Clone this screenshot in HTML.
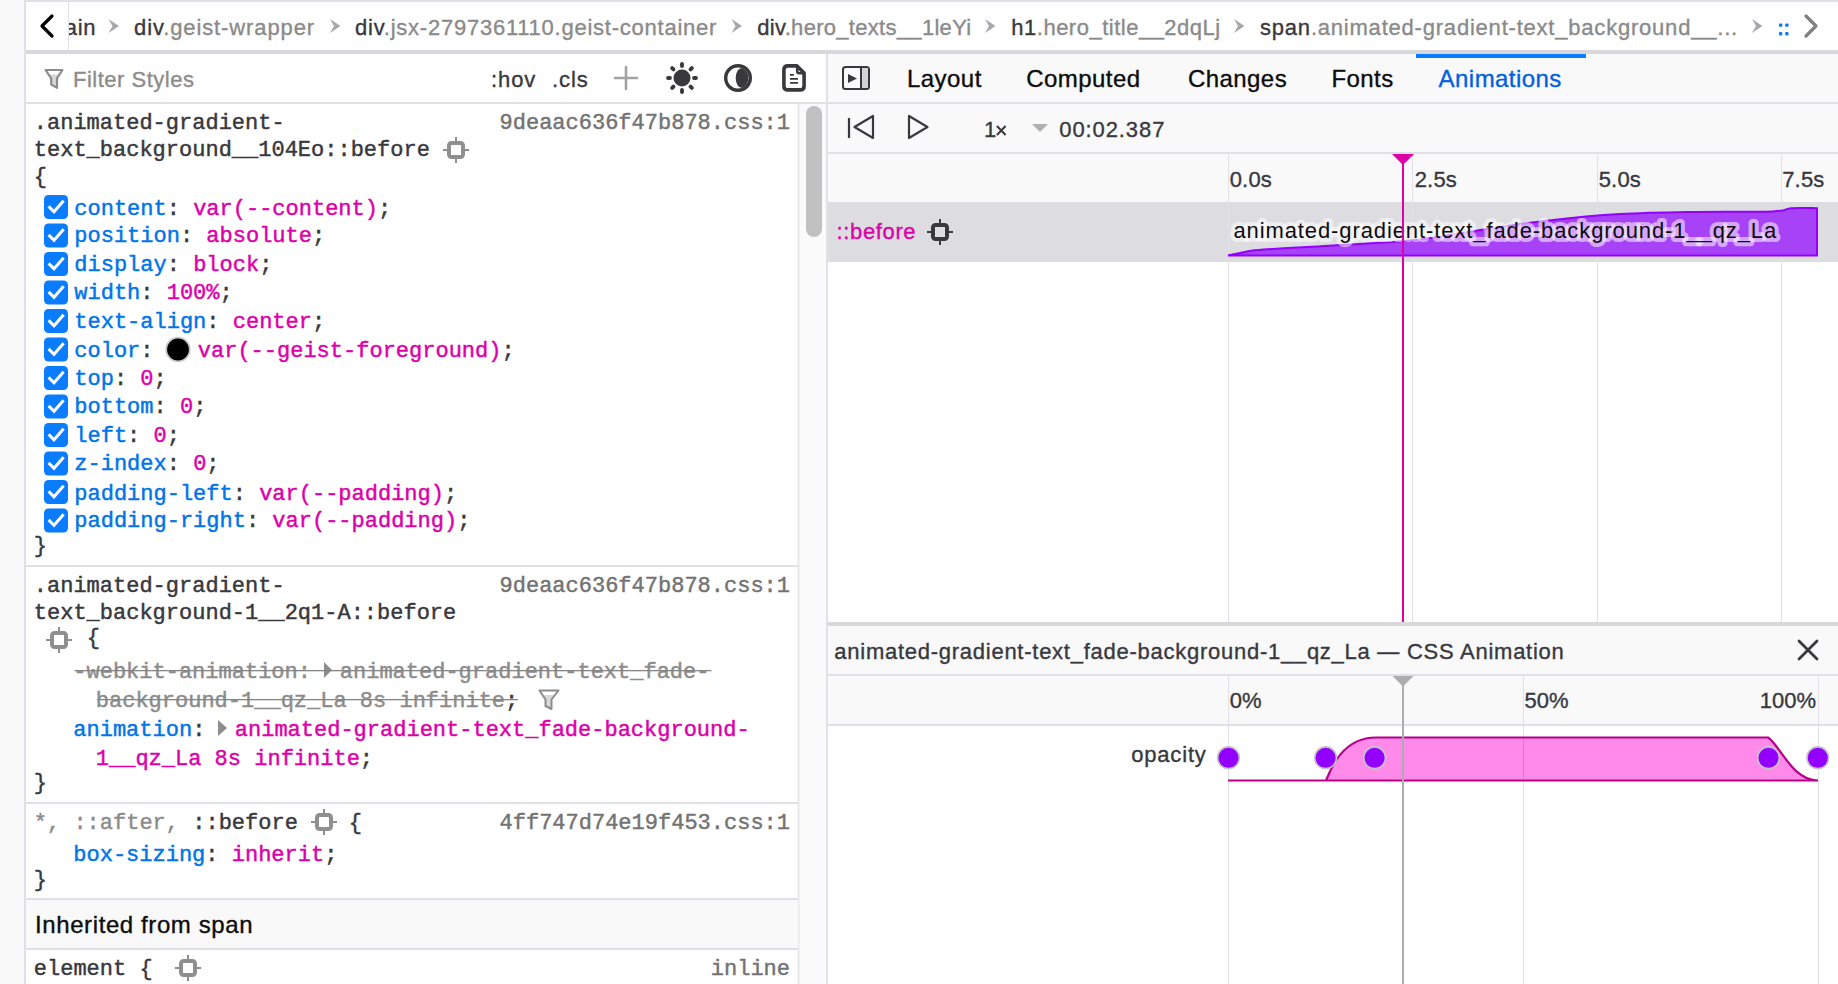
<!DOCTYPE html>
<html><head><meta charset="utf-8"><style>html,body{margin:0;padding:0;width:1838px;height:984px;overflow:hidden;background:#fff}svg{display:block}</style></head>
<body><svg width="1838" height="984" viewBox="0 0 1838 984"><rect x="0" y="0" width="1838" height="984" fill="#ffffff" />
<rect x="0" y="0" width="24" height="984" fill="#f9f9fa" />
<rect x="24" y="0" width="2" height="984" fill="#e0e0e6" />
<rect x="26" y="0" width="1812" height="2" fill="#e0e0e6" />
<rect x="26" y="50" width="1812" height="4" fill="#d7d7dc" />
<rect x="68" y="2" width="1" height="48" fill="#e0e0e6" />
<path d="M52,16 L42,26 L52,36" fill="none" stroke="#000" stroke-width="3.2" stroke-linecap="round" stroke-linejoin="round"/>
<path d="M1806,16 L1816,26 L1806,36" fill="none" stroke="#808080" stroke-width="3.2" stroke-linecap="round" stroke-linejoin="round"/>
<defs><clipPath id="bc"><rect x="69" y="2" width="1725" height="48"/></clipPath></defs>
<g clip-path="url(#bc)">
<text x="45.5" y="35" font-family="'Liberation Sans', sans-serif" font-size="22" style="white-space:pre" letter-spacing="0.8" ><tspan fill="#38383d" stroke="#38383d" stroke-width="0.35">main</tspan></text>
<path d="M108.5,19 L119.0,26 L108.5,33 L112.5,26 Z" fill="#a7a7ad"/>
<text x="134" y="35" font-family="'Liberation Sans', sans-serif" font-size="22" style="white-space:pre" letter-spacing="0.89" ><tspan fill="#38383d" stroke="#38383d" stroke-width="0.35">div</tspan><tspan fill="#8a8a8a" stroke="#8a8a8a" stroke-width="0.35">.geist-wrapper</tspan></text>
<path d="M330,19 L340.5,26 L330,33 L334,26 Z" fill="#a7a7ad"/>
<text x="355" y="35" font-family="'Liberation Sans', sans-serif" font-size="22" style="white-space:pre" letter-spacing="0.76" ><tspan fill="#38383d" stroke="#38383d" stroke-width="0.35">div</tspan><tspan fill="#8a8a8a" stroke="#8a8a8a" stroke-width="0.35">.jsx-2797361110.geist-container</tspan></text>
<path d="M731.5,19 L742.0,26 L731.5,33 L735.5,26 Z" fill="#a7a7ad"/>
<text x="757.3" y="35" font-family="'Liberation Sans', sans-serif" font-size="22" style="white-space:pre" letter-spacing="0.3" ><tspan fill="#38383d" stroke="#38383d" stroke-width="0.35">div</tspan><tspan fill="#8a8a8a" stroke="#8a8a8a" stroke-width="0.35">.hero_texts__1leYi</tspan></text>
<path d="M985,19 L995.5,26 L985,33 L989,26 Z" fill="#a7a7ad"/>
<text x="1011.3" y="35" font-family="'Liberation Sans', sans-serif" font-size="22" style="white-space:pre" letter-spacing="0.5" ><tspan fill="#38383d" stroke="#38383d" stroke-width="0.35">h1</tspan><tspan fill="#8a8a8a" stroke="#8a8a8a" stroke-width="0.35">.hero_title__2dqLj</tspan></text>
<path d="M1234,19 L1244.5,26 L1234,33 L1238,26 Z" fill="#a7a7ad"/>
<text x="1260" y="35" font-family="'Liberation Sans', sans-serif" font-size="22" style="white-space:pre" letter-spacing="0.79" ><tspan fill="#38383d" stroke="#38383d" stroke-width="0.35">span</tspan><tspan fill="#8a8a8a" stroke="#8a8a8a" stroke-width="0.35">.animated-gradient-text_background__...</tspan></text>
<path d="M1752,19 L1762.5,26 L1752,33 L1756,26 Z" fill="#a7a7ad"/>
</g>
<rect x="1779" y="23.4" width="3.3" height="3.4" rx="0.9" fill="#0a7cff"/>
<rect x="1779" y="32.0" width="3.3" height="3.4" rx="0.9" fill="#0a7cff"/>
<rect x="1785.2" y="23.4" width="3.3" height="3.4" rx="0.9" fill="#0a7cff"/>
<rect x="1785.2" y="32.0" width="3.3" height="3.4" rx="0.9" fill="#0a7cff"/>
<rect x="26" y="102" width="800" height="2" fill="#e0e0e6" />
<path d="M48.6,74.5 L59.5,74.5 L57,78.3 L57,87.8 L51.2,84.5 L51.2,78.3 Z" fill="#d9d9dc"/>
<path d="M45.6,70 L62.4,70 L57,78.3 L57,87.8 L51.2,84.5 L51.2,78.3 Z" fill="none" stroke="#8c8c8c" stroke-width="2.2" stroke-linejoin="round"/>
<text x="73" y="87" font-family="'Liberation Sans', sans-serif" font-size="22" fill="#8c8c8c" stroke="#8c8c8c" stroke-width="0.35" letter-spacing="0.5" >Filter Styles</text>
<text x="491" y="87" font-family="'Liberation Sans', sans-serif" font-size="22" fill="#38383d" stroke="#38383d" stroke-width="0.35" letter-spacing="0.9" >:hov</text>
<text x="552" y="87" font-family="'Liberation Sans', sans-serif" font-size="22" fill="#38383d" stroke="#38383d" stroke-width="0.35" letter-spacing="0.9" >.cls</text>
<path d="M626,67 V89 M615,78 H637" stroke="#a3a3a3" stroke-width="2.6" stroke-linecap="round"/>
<g fill="#38383d"><circle cx="682" cy="78" r="8.5"/>
<rect x="693.05" y="75.10" width="3.9" height="5.8" rx="1.95" transform="rotate(90 695.00 78.00)"/>
<rect x="689.24" y="84.29" width="3.9" height="5.8" rx="1.95" transform="rotate(135 691.19 87.19)"/>
<rect x="680.05" y="88.10" width="3.9" height="5.8" rx="1.95" transform="rotate(180 682.00 91.00)"/>
<rect x="670.86" y="84.29" width="3.9" height="5.8" rx="1.95" transform="rotate(225 672.81 87.19)"/>
<rect x="667.05" y="75.10" width="3.9" height="5.8" rx="1.95" transform="rotate(270 669.00 78.00)"/>
<rect x="670.86" y="65.91" width="3.9" height="5.8" rx="1.95" transform="rotate(315 672.81 68.81)"/>
<rect x="680.05" y="62.10" width="3.9" height="5.8" rx="1.95" transform="rotate(360 682.00 65.00)"/>
<rect x="689.24" y="65.91" width="3.9" height="5.8" rx="1.95" transform="rotate(405 691.19 68.81)"/>
</g>
<circle cx="738" cy="78" r="12.3" fill="none" stroke="#38383d" stroke-width="3.4"/>
<path d="M742,67.9 A11.2,11.2 0 0 1 742,88.1 A6.3,10.1 0 0 1 742,67.9 Z" fill="#38383d"/>
<path d="M787.9,65.9 H797 L804.1,73 V85.9 Q804.1,89.9 800.1,89.9 H787.9 Q783.9,89.9 783.9,85.9 V69.9 Q783.9,65.9 787.9,65.9 Z" fill="none" stroke="#38383d" stroke-width="3.6" stroke-linejoin="round"/>
<path d="M797.2,66.5 V71 Q797.2,73.2 799.4,73.2 H803.5" fill="none" stroke="#38383d" stroke-width="2.6"/>
<path d="M790,74.9 H793.9 M790,78.9 H798 M790,82.9 H798" stroke="#38383d" stroke-width="1.8"/>
<rect x="798" y="104" width="28" height="880" fill="#fafafa" />
<rect x="797.5" y="104" width="2" height="880" fill="#e8e8e8" />
<rect x="806" y="106" width="16" height="131" fill="#c1c1c1" rx="8"/>
<rect x="826" y="54" width="2" height="930" fill="#e0e0e6" />
<text x="33.8" y="128.6" font-family="'Liberation Mono', monospace" font-size="22" style="white-space:pre" ><tspan fill="#38383d" stroke="#38383d" stroke-width="0.45">.animated-gradient-</tspan></text>
<text x="33.8" y="155.8" font-family="'Liberation Mono', monospace" font-size="22" style="white-space:pre" ><tspan fill="#38383d" stroke="#38383d" stroke-width="0.45">text_background__104Eo::before</tspan></text>
<g stroke="#8f8f8f" fill="none"><rect x="449" y="143" width="14" height="14" rx="2.5" stroke-width="4"/><path d="M456 137 V141 M456 159 V163 M443 150 H447 M465 150 H469" stroke-width="2"/></g>
<text x="33.8" y="183" font-family="'Liberation Mono', monospace" font-size="22" style="white-space:pre" ><tspan fill="#38383d" stroke="#38383d" stroke-width="0.45">{</tspan></text>
<text x="790" y="128.6" font-family="'Liberation Mono', monospace" font-size="22" style="white-space:pre" text-anchor="end"><tspan fill="#737373" stroke="#737373" stroke-width="0.45">9deaac636f47b878.css:1</tspan></text>
<rect x="44" y="195.0" width="24" height="24" rx="4.5" fill="#0a7cff"/><path d="M48.6 206.4 L54 211.8 L63.6 200.8" fill="none" stroke="#fff" stroke-width="3" stroke-linecap="butt" stroke-linejoin="miter"/>
<text x="74.3" y="215" font-family="'Liberation Mono', monospace" font-size="22" style="white-space:pre" ><tspan fill="#0074e8" stroke="#0074e8" stroke-width="0.45">content</tspan><tspan fill="#38383d" stroke="#38383d" stroke-width="0.45">: </tspan><tspan fill="#dd00a9" stroke="#dd00a9" stroke-width="0.45">var(--content)</tspan><tspan fill="#38383d" stroke="#38383d" stroke-width="0.45">;</tspan></text>
<rect x="44" y="223.5" width="24" height="24" rx="4.5" fill="#0a7cff"/><path d="M48.6 234.9 L54 240.3 L63.6 229.3" fill="none" stroke="#fff" stroke-width="3" stroke-linecap="butt" stroke-linejoin="miter"/>
<text x="74.3" y="242.3" font-family="'Liberation Mono', monospace" font-size="22" style="white-space:pre" ><tspan fill="#0074e8" stroke="#0074e8" stroke-width="0.45">position</tspan><tspan fill="#38383d" stroke="#38383d" stroke-width="0.45">: </tspan><tspan fill="#dd00a9" stroke="#dd00a9" stroke-width="0.45">absolute</tspan><tspan fill="#38383d" stroke="#38383d" stroke-width="0.45">;</tspan></text>
<rect x="44" y="252.0" width="24" height="24" rx="4.5" fill="#0a7cff"/><path d="M48.6 263.4 L54 268.8 L63.6 257.8" fill="none" stroke="#fff" stroke-width="3" stroke-linecap="butt" stroke-linejoin="miter"/>
<text x="74.3" y="271.3" font-family="'Liberation Mono', monospace" font-size="22" style="white-space:pre" ><tspan fill="#0074e8" stroke="#0074e8" stroke-width="0.45">display</tspan><tspan fill="#38383d" stroke="#38383d" stroke-width="0.45">: </tspan><tspan fill="#dd00a9" stroke="#dd00a9" stroke-width="0.45">block</tspan><tspan fill="#38383d" stroke="#38383d" stroke-width="0.45">;</tspan></text>
<rect x="44" y="280.5" width="24" height="24" rx="4.5" fill="#0a7cff"/><path d="M48.6 291.9 L54 297.3 L63.6 286.3" fill="none" stroke="#fff" stroke-width="3" stroke-linecap="butt" stroke-linejoin="miter"/>
<text x="74.3" y="299.2" font-family="'Liberation Mono', monospace" font-size="22" style="white-space:pre" ><tspan fill="#0074e8" stroke="#0074e8" stroke-width="0.45">width</tspan><tspan fill="#38383d" stroke="#38383d" stroke-width="0.45">: </tspan><tspan fill="#dd00a9" stroke="#dd00a9" stroke-width="0.45">100%</tspan><tspan fill="#38383d" stroke="#38383d" stroke-width="0.45">;</tspan></text>
<rect x="44" y="309.0" width="24" height="24" rx="4.5" fill="#0a7cff"/><path d="M48.6 320.4 L54 325.8 L63.6 314.8" fill="none" stroke="#fff" stroke-width="3" stroke-linecap="butt" stroke-linejoin="miter"/>
<text x="74.3" y="328.3" font-family="'Liberation Mono', monospace" font-size="22" style="white-space:pre" ><tspan fill="#0074e8" stroke="#0074e8" stroke-width="0.45">text-align</tspan><tspan fill="#38383d" stroke="#38383d" stroke-width="0.45">: </tspan><tspan fill="#dd00a9" stroke="#dd00a9" stroke-width="0.45">center</tspan><tspan fill="#38383d" stroke="#38383d" stroke-width="0.45">;</tspan></text>
<rect x="44" y="337.5" width="24" height="24" rx="4.5" fill="#0a7cff"/><path d="M48.6 348.9 L54 354.3 L63.6 343.3" fill="none" stroke="#fff" stroke-width="3" stroke-linecap="butt" stroke-linejoin="miter"/>
<text x="74.3" y="356.5" font-family="'Liberation Mono', monospace" font-size="22" style="white-space:pre" ><tspan fill="#0074e8" stroke="#0074e8" stroke-width="0.45">color</tspan><tspan fill="#38383d" stroke="#38383d" stroke-width="0.45">:</tspan></text>
<circle cx="178" cy="349.5" r="11.8" fill="#000" stroke="#c8c8c8" stroke-width="1.8"/>
<text x="197.8" y="356.5" font-family="'Liberation Mono', monospace" font-size="22" style="white-space:pre" ><tspan fill="#dd00a9" stroke="#dd00a9" stroke-width="0.45">var(--geist-foreground)</tspan><tspan fill="#38383d" stroke="#38383d" stroke-width="0.45">;</tspan></text>
<rect x="44" y="366.0" width="24" height="24" rx="4.5" fill="#0a7cff"/><path d="M48.6 377.4 L54 382.8 L63.6 371.8" fill="none" stroke="#fff" stroke-width="3" stroke-linecap="butt" stroke-linejoin="miter"/>
<text x="74.3" y="384.8" font-family="'Liberation Mono', monospace" font-size="22" style="white-space:pre" ><tspan fill="#0074e8" stroke="#0074e8" stroke-width="0.45">top</tspan><tspan fill="#38383d" stroke="#38383d" stroke-width="0.45">: </tspan><tspan fill="#dd00a9" stroke="#dd00a9" stroke-width="0.45">0</tspan><tspan fill="#38383d" stroke="#38383d" stroke-width="0.45">;</tspan></text>
<rect x="44" y="394.5" width="24" height="24" rx="4.5" fill="#0a7cff"/><path d="M48.6 405.9 L54 411.3 L63.6 400.3" fill="none" stroke="#fff" stroke-width="3" stroke-linecap="butt" stroke-linejoin="miter"/>
<text x="74.3" y="413.2" font-family="'Liberation Mono', monospace" font-size="22" style="white-space:pre" ><tspan fill="#0074e8" stroke="#0074e8" stroke-width="0.45">bottom</tspan><tspan fill="#38383d" stroke="#38383d" stroke-width="0.45">: </tspan><tspan fill="#dd00a9" stroke="#dd00a9" stroke-width="0.45">0</tspan><tspan fill="#38383d" stroke="#38383d" stroke-width="0.45">;</tspan></text>
<rect x="44" y="423.0" width="24" height="24" rx="4.5" fill="#0a7cff"/><path d="M48.6 434.4 L54 439.8 L63.6 428.8" fill="none" stroke="#fff" stroke-width="3" stroke-linecap="butt" stroke-linejoin="miter"/>
<text x="74.3" y="441.6" font-family="'Liberation Mono', monospace" font-size="22" style="white-space:pre" ><tspan fill="#0074e8" stroke="#0074e8" stroke-width="0.45">left</tspan><tspan fill="#38383d" stroke="#38383d" stroke-width="0.45">: </tspan><tspan fill="#dd00a9" stroke="#dd00a9" stroke-width="0.45">0</tspan><tspan fill="#38383d" stroke="#38383d" stroke-width="0.45">;</tspan></text>
<rect x="44" y="451.5" width="24" height="24" rx="4.5" fill="#0a7cff"/><path d="M48.6 462.9 L54 468.3 L63.6 457.3" fill="none" stroke="#fff" stroke-width="3" stroke-linecap="butt" stroke-linejoin="miter"/>
<text x="74.3" y="470.1" font-family="'Liberation Mono', monospace" font-size="22" style="white-space:pre" ><tspan fill="#0074e8" stroke="#0074e8" stroke-width="0.45">z-index</tspan><tspan fill="#38383d" stroke="#38383d" stroke-width="0.45">: </tspan><tspan fill="#dd00a9" stroke="#dd00a9" stroke-width="0.45">0</tspan><tspan fill="#38383d" stroke="#38383d" stroke-width="0.45">;</tspan></text>
<rect x="44" y="480.0" width="24" height="24" rx="4.5" fill="#0a7cff"/><path d="M48.6 491.4 L54 496.8 L63.6 485.8" fill="none" stroke="#fff" stroke-width="3" stroke-linecap="butt" stroke-linejoin="miter"/>
<text x="74.3" y="499.5" font-family="'Liberation Mono', monospace" font-size="22" style="white-space:pre" ><tspan fill="#0074e8" stroke="#0074e8" stroke-width="0.45">padding-left</tspan><tspan fill="#38383d" stroke="#38383d" stroke-width="0.45">: </tspan><tspan fill="#dd00a9" stroke="#dd00a9" stroke-width="0.45">var(--padding)</tspan><tspan fill="#38383d" stroke="#38383d" stroke-width="0.45">;</tspan></text>
<rect x="44" y="508.5" width="24" height="24" rx="4.5" fill="#0a7cff"/><path d="M48.6 519.9 L54 525.3 L63.6 514.3" fill="none" stroke="#fff" stroke-width="3" stroke-linecap="butt" stroke-linejoin="miter"/>
<text x="74.3" y="527.2" font-family="'Liberation Mono', monospace" font-size="22" style="white-space:pre" ><tspan fill="#0074e8" stroke="#0074e8" stroke-width="0.45">padding-right</tspan><tspan fill="#38383d" stroke="#38383d" stroke-width="0.45">: </tspan><tspan fill="#dd00a9" stroke="#dd00a9" stroke-width="0.45">var(--padding)</tspan><tspan fill="#38383d" stroke="#38383d" stroke-width="0.45">;</tspan></text>
<text x="33.8" y="552" font-family="'Liberation Mono', monospace" font-size="22" style="white-space:pre" ><tspan fill="#38383d" stroke="#38383d" stroke-width="0.45">}</tspan></text>
<rect x="26" y="565" width="772" height="2" fill="#e0e0e6" />
<text x="33.8" y="592" font-family="'Liberation Mono', monospace" font-size="22" style="white-space:pre" ><tspan fill="#38383d" stroke="#38383d" stroke-width="0.45">.animated-gradient-</tspan></text>
<text x="33.8" y="618.5" font-family="'Liberation Mono', monospace" font-size="22" style="white-space:pre" ><tspan fill="#38383d" stroke="#38383d" stroke-width="0.45">text_background-1__2q1-A::before</tspan></text>
<text x="790" y="592" font-family="'Liberation Mono', monospace" font-size="22" style="white-space:pre" text-anchor="end"><tspan fill="#737373" stroke="#737373" stroke-width="0.45">9deaac636f47b878.css:1</tspan></text>
<g stroke="#8f8f8f" fill="none"><rect x="52" y="633" width="14" height="14" rx="2.5" stroke-width="4"/><path d="M59 627 V631 M59 649 V653 M46 640 H50 M68 640 H72" stroke-width="2"/></g>
<text x="86.8" y="643.5" font-family="'Liberation Mono', monospace" font-size="22" style="white-space:pre" ><tspan fill="#38383d" stroke="#38383d" stroke-width="0.45">{</tspan></text>
<text x="73.3" y="677.7" font-family="'Liberation Mono', monospace" font-size="22" style="white-space:pre" ><tspan fill="#8c8c8c" stroke="#8c8c8c" stroke-width="0.45">-webkit-animation:</tspan></text>
<path d="M324,662 L332,670 L324,678 Z" fill="#8c8c8c"/>
<text x="339.8" y="677.7" font-family="'Liberation Mono', monospace" font-size="22" style="white-space:pre" ><tspan fill="#8c8c8c" stroke="#8c8c8c" stroke-width="0.45">animated-gradient-text_fade-</tspan></text>
<rect x="74.5" y="670" width="637" height="1.3" fill="#858585" />
<text x="95.8" y="707" font-family="'Liberation Mono', monospace" font-size="22" style="white-space:pre" ><tspan fill="#8c8c8c" stroke="#8c8c8c" stroke-width="0.45">background-1__qz_La 8s infinite</tspan><tspan fill="#38383d" stroke="#38383d" stroke-width="0.45">;</tspan></text>
<rect x="97" y="699" width="421" height="1.3" fill="#858585" />
<path d="M542.5,695 L555.5,695 L551.5,699.5 L551.5,709 L545.5,706 L545.5,699.5 Z" fill="#d9d9dc"/>
<path d="M539.5,690.5 L558.5,690.5 L551.5,699.5 L551.5,709 L545.5,706 L545.5,699.5 Z" fill="none" stroke="#8c8c8c" stroke-width="2" stroke-linejoin="round"/>
<text x="73.3" y="736.3" font-family="'Liberation Mono', monospace" font-size="22" style="white-space:pre" ><tspan fill="#0074e8" stroke="#0074e8" stroke-width="0.45">animation</tspan><tspan fill="#38383d" stroke="#38383d" stroke-width="0.45">:</tspan></text>
<path d="M218,720 L227,728 L218,736 Z" fill="#8c8c8c"/>
<text x="234.8" y="736.3" font-family="'Liberation Mono', monospace" font-size="22" style="white-space:pre" ><tspan fill="#dd00a9" stroke="#dd00a9" stroke-width="0.45">animated-gradient-text_fade-background-</tspan></text>
<text x="95.8" y="764.6" font-family="'Liberation Mono', monospace" font-size="22" style="white-space:pre" ><tspan fill="#dd00a9" stroke="#dd00a9" stroke-width="0.45">1__qz_La 8s infinite</tspan><tspan fill="#38383d" stroke="#38383d" stroke-width="0.45">;</tspan></text>
<text x="33.8" y="789" font-family="'Liberation Mono', monospace" font-size="22" style="white-space:pre" ><tspan fill="#38383d" stroke="#38383d" stroke-width="0.45">}</tspan></text>
<rect x="26" y="802" width="772" height="2" fill="#e0e0e6" />
<text x="33.8" y="829" font-family="'Liberation Mono', monospace" font-size="22" style="white-space:pre" ><tspan fill="#8c8c8c" stroke="#8c8c8c" stroke-width="0.45">*, ::after, </tspan><tspan fill="#38383d" stroke="#38383d" stroke-width="0.45">::before</tspan></text>
<g stroke="#8f8f8f" fill="none"><rect x="317" y="815" width="14" height="14" rx="2.5" stroke-width="4"/><path d="M324 809 V813 M324 831 V835 M311 822 H315 M333 822 H337" stroke-width="2"/></g>
<text x="348.8" y="829" font-family="'Liberation Mono', monospace" font-size="22" style="white-space:pre" ><tspan fill="#38383d" stroke="#38383d" stroke-width="0.45">{</tspan></text>
<text x="790" y="829" font-family="'Liberation Mono', monospace" font-size="22" style="white-space:pre" text-anchor="end"><tspan fill="#737373" stroke="#737373" stroke-width="0.45">4ff747d74e19f453.css:1</tspan></text>
<text x="73.3" y="861" font-family="'Liberation Mono', monospace" font-size="22" style="white-space:pre" ><tspan fill="#0074e8" stroke="#0074e8" stroke-width="0.45">box-sizing</tspan><tspan fill="#38383d" stroke="#38383d" stroke-width="0.45">: </tspan><tspan fill="#dd00a9" stroke="#dd00a9" stroke-width="0.45">inherit</tspan><tspan fill="#38383d" stroke="#38383d" stroke-width="0.45">;</tspan></text>
<text x="33.8" y="885.5" font-family="'Liberation Mono', monospace" font-size="22" style="white-space:pre" ><tspan fill="#38383d" stroke="#38383d" stroke-width="0.45">}</tspan></text>
<rect x="26" y="898" width="772" height="2" fill="#e0e0e6" />
<rect x="26" y="900" width="772" height="48" fill="#f9f9fa" />
<text x="35" y="933" font-family="'Liberation Sans', sans-serif" font-size="24" fill="#0c0c0d" stroke="#0c0c0d" stroke-width="0.35" letter-spacing="0.6" >Inherited from span</text>
<rect x="26" y="948" width="772" height="2" fill="#e0e0e6" />
<text x="33.8" y="975" font-family="'Liberation Mono', monospace" font-size="22" style="white-space:pre" ><tspan fill="#38383d" stroke="#38383d" stroke-width="0.45">element {</tspan></text>
<g stroke="#8f8f8f" fill="none"><rect x="181" y="961" width="14" height="14" rx="2.5" stroke-width="4"/><path d="M188 955 V959 M188 977 V981 M175 968 H179 M197 968 H201" stroke-width="2"/></g>
<text x="790" y="975" font-family="'Liberation Mono', monospace" font-size="22" style="white-space:pre" text-anchor="end"><tspan fill="#737373" stroke="#737373" stroke-width="0.45">inline</tspan></text>
<rect x="828" y="54" width="1010" height="48" fill="#f9f9fa" />
<rect x="828" y="102" width="1010" height="2" fill="#e0e0e6" />
<rect x="843" y="67" width="26" height="22" rx="2.5" fill="none" stroke="#38383d" stroke-width="2"/>
<rect x="862" y="68" width="6" height="20" fill="#d4d4d8"/>
<rect x="860" y="67" width="2" height="22" fill="#38383d" />
<path d="M848,74 L857,78.5 L848,83 Z" fill="#38383d"/>
<text x="907" y="87" font-family="'Liberation Sans', sans-serif" font-size="24" fill="#0c0c0d" stroke="#0c0c0d" stroke-width="0.35" letter-spacing="0.45" >Layout</text>
<text x="1026.2" y="87" font-family="'Liberation Sans', sans-serif" font-size="24" fill="#0c0c0d" stroke="#0c0c0d" stroke-width="0.35" letter-spacing="0.45" >Computed</text>
<text x="1187.9" y="87" font-family="'Liberation Sans', sans-serif" font-size="24" fill="#0c0c0d" stroke="#0c0c0d" stroke-width="0.35" letter-spacing="0.45" >Changes</text>
<text x="1331.4" y="87" font-family="'Liberation Sans', sans-serif" font-size="24" fill="#0c0c0d" stroke="#0c0c0d" stroke-width="0.35" letter-spacing="0.45" >Fonts</text>
<text x="1438.6" y="87" font-family="'Liberation Sans', sans-serif" font-size="24" fill="#0061e0" stroke="#0061e0" stroke-width="0.35" letter-spacing="0.45" >Animations</text>
<rect x="1416" y="54" width="170" height="4" fill="#0a7cff" />
<rect x="828" y="104" width="1010" height="48" fill="#f9f9fa" />
<rect x="828" y="152" width="1010" height="2" fill="#e0e0e6" />
<path d="M849,118 V138" stroke="#38383d" stroke-width="2.2"/>
<path d="M873,116 V138 L854.5,127 Z" fill="none" stroke="#38383d" stroke-width="2.2" stroke-linejoin="round"/>
<path d="M909,116 V138 L927.5,127 Z" fill="none" stroke="#38383d" stroke-width="2.2" stroke-linejoin="round"/>
<text x="984" y="137" font-family="'Liberation Sans', sans-serif" font-size="22" fill="#38383d" stroke="#38383d" stroke-width="0.35" >1</text>
<path d="M996.9,126 L1005.6,135 M1005.6,126 L996.9,135" stroke="#38383d" stroke-width="2"/>
<path d="M1032,124 H1048 L1040,132 Z" fill="#b1b1b3"/>
<text x="1059.3" y="137" font-family="'Liberation Sans', sans-serif" font-size="22" fill="#38383d" stroke="#38383d" stroke-width="0.35" letter-spacing="0.9" >00:02.387</text>
<rect x="828" y="154" width="1010" height="48" fill="#f9f9fa" />
<rect x="828" y="202" width="1010" height="60" fill="#dcdce1" />
<rect x="1228" y="154" width="1" height="468" fill="#e0e0e6" />
<rect x="1412" y="154" width="1" height="468" fill="#e0e0e6" />
<rect x="1597" y="154" width="1" height="468" fill="#e0e0e6" />
<rect x="1781" y="154" width="1" height="468" fill="#e0e0e6" />
<text x="1229.7" y="186.6" font-family="'Liberation Sans', sans-serif" font-size="22" fill="#38383d" stroke="#38383d" stroke-width="0.35" letter-spacing="0.2" >0.0s</text>
<text x="1414.7" y="186.6" font-family="'Liberation Sans', sans-serif" font-size="22" fill="#38383d" stroke="#38383d" stroke-width="0.35" letter-spacing="0.2" >2.5s</text>
<text x="1598.7" y="186.6" font-family="'Liberation Sans', sans-serif" font-size="22" fill="#38383d" stroke="#38383d" stroke-width="0.35" letter-spacing="0.2" >5.0s</text>
<text x="1782.2" y="186.6" font-family="'Liberation Sans', sans-serif" font-size="22" fill="#38383d" stroke="#38383d" stroke-width="0.35" letter-spacing="0.2" >7.5s</text>
<text x="836.5" y="239" font-family="'Liberation Sans', sans-serif" font-size="22" fill="#dd00a9" stroke="#dd00a9" stroke-width="0.35" letter-spacing="0.64" >::before</text>
<g stroke="#38383d" fill="none"><rect x="933" y="225" width="14" height="14" rx="2.5" stroke-width="4"/><path d="M940 219 V223 M940 241 V245 M927 232 H931 M949 232 H953" stroke-width="2"/></g>
<path d="M1228,255.5 C1230.8,254.9 1239.1,253.0 1245,252 C1250.9,251.0 1249.5,250.7 1263.5,249.6 C1277.5,248.5 1305.6,247.1 1328.8,245.7 C1352.0,244.3 1384.7,242.8 1402.8,241.3 C1420.9,239.9 1422.7,239.2 1437.6,237 C1452.5,234.8 1473.9,231.0 1492,228.3 C1510.1,225.6 1525.1,223.1 1546.4,220.7 C1567.7,218.3 1596.1,215.5 1620,214.1 C1643.9,212.7 1664.5,212.4 1690,212 C1715.5,211.6 1755.9,212.0 1772.7,211.4 C1789.5,210.8 1783.6,208.7 1791,208.2 C1798.4,207.7 1812.7,208.2 1817,208.2 V255.5 Z" fill="#a742f7" stroke="#9400ff" stroke-width="2"/>
<text x="1233.4" y="238.2" font-family="'Liberation Sans', sans-serif" font-size="22" fill="#0c0c0d" letter-spacing="0.9" stroke="rgba(255,255,255,0.55)" stroke-width="8" stroke-linejoin="round" paint-order="stroke">animated-gradient-text_fade-background-1__qz_La</text>
<path d="M1392,154 H1414 L1403,165 Z" fill="#dd00a9"/>
<rect x="1402" y="154" width="2" height="468" fill="#dd00a9" />
<rect x="828" y="622" width="1010" height="4" fill="#d7d7dc" />
<rect x="828" y="626" width="1010" height="48" fill="#f9f9fa" />
<rect x="828" y="674" width="1010" height="2" fill="#e0e0e6" />
<text x="834.3" y="659" font-family="'Liberation Sans', sans-serif" font-size="22" fill="#38383d" stroke="#38383d" stroke-width="0.35" letter-spacing="0.74" >animated-gradient-text_fade-background-1__qz_La — CSS Animation</text>
<path d="M1799,641 L1817,659 M1817,641 L1799,659" stroke="#38383d" stroke-width="2.8" stroke-linecap="round"/>
<rect x="828" y="676" width="1010" height="48" fill="#f9f9fa" />
<rect x="828" y="724" width="1010" height="2" fill="#e0e0e6" />
<rect x="1228" y="676" width="1" height="308" fill="#e0e0e6" />
<rect x="1523" y="676" width="1" height="308" fill="#e0e0e6" />
<rect x="1818" y="676" width="1" height="308" fill="#e0e0e6" />
<text x="1229.7" y="708" font-family="'Liberation Sans', sans-serif" font-size="22" fill="#38383d" stroke="#38383d" stroke-width="0.35" >0%</text>
<text x="1524.5" y="708" font-family="'Liberation Sans', sans-serif" font-size="22" fill="#38383d" stroke="#38383d" stroke-width="0.35" >50%</text>
<text x="1816" y="708" font-family="'Liberation Sans', sans-serif" font-size="22" fill="#38383d" stroke="#38383d" stroke-width="0.35" text-anchor="end" >100%</text>
<text x="1206.7" y="762.3" font-family="'Liberation Sans', sans-serif" font-size="22" fill="#38383d" stroke="#38383d" stroke-width="0.35" letter-spacing="0.83" text-anchor="end" >opacity</text>
<path d="M1228,780.5 H1326 C1331,768 1343,737.5 1376,737.5 H1768 C1780,745 1792,780.5 1818,780.5 Z" fill="#ff8ae9" stroke="#b8008a" stroke-width="2.2"/>
<path d="M1523.5,739.5 V779" stroke="#d84fbf" stroke-width="1" stroke-dasharray="1 1"/>
<circle cx="1228.5" cy="757.8" r="10.9" fill="#9400ff" stroke="#c4c4c4" stroke-width="1.7"/>
<circle cx="1325.6" cy="757.8" r="10.9" fill="#9400ff" stroke="#c4c4c4" stroke-width="1.7"/>
<circle cx="1374.6" cy="757.8" r="10.9" fill="#9400ff" stroke="#c4c4c4" stroke-width="1.7"/>
<circle cx="1768.5" cy="757.8" r="10.9" fill="#9400ff" stroke="#c4c4c4" stroke-width="1.7"/>
<circle cx="1817.8" cy="757.8" r="10.9" fill="#9400ff" stroke="#c4c4c4" stroke-width="1.7"/>
<path d="M1392.5,676 H1413.5 L1403,686.5 Z" fill="#acacac"/>
<rect x="1402" y="676" width="2" height="308" fill="#acacac" /></svg></body></html>
